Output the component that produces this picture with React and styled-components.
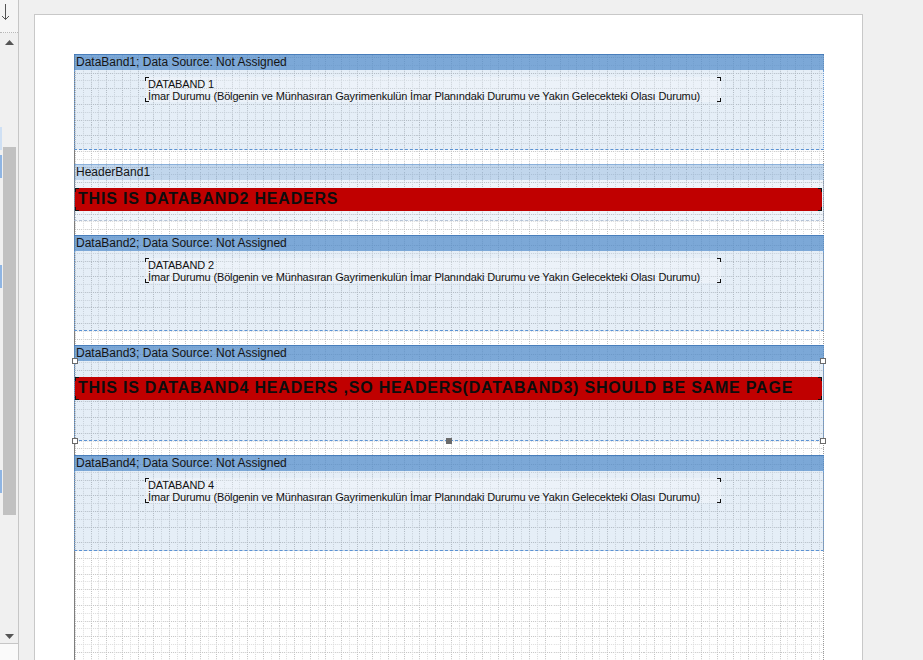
import React from "react";
import styled, { createGlobalStyle } from "styled-components";

const GlobalStyle = createGlobalStyle`
  html, body { margin: 0; padding: 0; }
  body {
    background: #f0f0f0;
    overflow: hidden;
    font-family: "Liberation Sans", Arial, sans-serif;
  }
  * { box-sizing: border-box; }
`;

const gridSvg = encodeURIComponent(
  "<svg xmlns='http://www.w3.org/2000/svg' width='15.66' height='15.66'>" +
    "<path d='M0.5 0V15.66M0 0.5H15.66' stroke='#c4c4c4' stroke-width='1' stroke-dasharray='1 1'/>" +
    "<path d='M8.33 0V15.66M0 8.33H15.66' stroke='#dcdcdc' stroke-width='1' stroke-dasharray='1 1'/>" +
    "</svg>"
);

const Screen = styled.div`
  display: flex;
  width: 923px;
  height: 660px;
  overflow: hidden;
`;

const LeftPanel = styled.div`
  width: 19px;
  flex: none;
  display: flex;
  flex-direction: column;
  border-right: 1px solid #c6c6c6;
  background: #f0f0f0;
`;

const TopTool = styled.div`
  height: 33px;
  flex: none;
  display: flex;
  justify-content: flex-start;
  padding-top: 3px;
  padding-left: 1px;
  border-bottom: 1px dotted #b8b8b8;
  background: #f5f5f5;
`;

const ScrollRow = styled.div`
  height: 610px;
  flex: none;
  display: flex;
`;

const Edge = styled.div`
  width: 2px;
  flex: none;
  display: flex;
  flex-direction: column;
`;

const Marker = styled.div`
  height: 23px;
  margin-top: ${(p) => p.$gap}px;
  background: ${(p) => (p.$light ? "#cfe0f4" : "#8fb5e3")};
`;

const ScrollTrack = styled.div`
  flex: 1;
  display: flex;
  flex-direction: column;
  align-items: center;
  padding-right: 2px;
`;

const ArrowBtn = styled.div`
  height: ${(p) => p.$h}px;
  display: flex;
  align-items: center;
  justify-content: center;
  flex: none;
`;

const Thumb = styled.div`
  width: 13px;
  height: 368px;
  margin-top: ${(p) => p.$top}px;
  background: #c1c1c1;
  flex: none;
`;

const TrackFill = styled.div`
  flex: 1;
`;

const PanelFoot = styled.div`
  flex: 1;
  border-top: 1px solid #c6c6c6;
  background: #fafafa;
`;

const Workspace = styled.div`
  flex: 1;
  padding-top: 14px;
  padding-left: 15px;
  background: #f0f0f0;
`;

const Page = styled.div`
  width: 829px;
  height: 700px;
  background: #ffffff;
  border: 1px solid #c8c8c8;
  padding: 39px 0 0 39px;
`;

const ReportArea = styled.div`
  width: 750px;
  height: 620px;
  border-left: 1px solid #7e7e7e;
  border-right: 1px dotted #9a9a9a;
  background-image: url("data:image/svg+xml,${gridSvg}");
  background-position: 0px 3px;
  display: flex;
  flex-direction: column;
`;

const Band = styled.div`
  margin-left: -1px;
  margin-right: -1px;
  margin-bottom: ${(p) => p.$gap}px;
  display: flex;
  flex-direction: column;
`;

const Caption = styled.div`
  height: 16px;
  padding-left: 2px;
  font-size: 12px;
  line-height: 15px;
  color: #151515;
  white-space: nowrap;
  background: ${(p) =>
    p.$header ? "rgba(74,134,200,0.34)" : "rgba(74,134,200,0.72)"};
  border-top: 1px solid
    ${(p) => (p.$header ? "rgba(74,134,200,0.45)" : "rgba(60,115,180,0.8)")};
`;

const Body = styled.div`
  position: relative;
  height: ${(p) => p.$h}px;
  padding-top: ${(p) => p.$pt}px;
  padding-left: ${(p) => p.$pl || 0}px;
  background: ${(p) =>
    p.$header ? "rgba(74,134,200,0.09)" : "rgba(74,134,200,0.14)"};
  border-left: 1px dotted
    ${(p) => (p.$header ? "rgba(120,150,190,0.6)" : "#6f9fd6")};
  border-right: 1px dotted
    ${(p) => (p.$header ? "rgba(120,150,190,0.6)" : "#6f9fd6")};
  border-bottom: 1px dashed
    ${(p) => (p.$header ? "#b5c3d6" : "#5b92d3")};
`;

const TextBox = styled.div`
  position: relative;
  width: 576px;
  height: 25px;
  padding: 1px 0 0 3px;
  font-size: 11px;
  line-height: 12px;
  letter-spacing: -0.15px;
  color: #111;
  background: rgba(255, 255, 255, 0.28);
  white-space: nowrap;
`;

const Corner = styled.span`
  position: absolute;
  width: 4px;
  height: 4px;
  border-color: #111;
  border-style: solid;
  border-width: 0;
  ${(p) => (p.$v === "t" ? "top: 0; border-top-width: 1.5px;" : "bottom: 0; border-bottom-width: 1.5px;")}
  ${(p) => (p.$h === "l" ? "left: 0; border-left-width: 1.5px;" : "right: 0; border-right-width: 1.5px;")}
`;

const RedBar = styled.div`
  position: relative;
  height: 23px;
  padding-left: 3px;
  background: #c00000;
  color: #0d0d0d;
  font-weight: bold;
  font-size: 16px;
  line-height: 22px;
  letter-spacing: 0.8px;
  white-space: nowrap;
  margin-right: 1px;
`;

const Handle = styled.span`
  position: absolute;
  width: 6px;
  height: 6px;
  border: 1px solid #6a6a6a;
  background: ${(p) => (p.$filled ? "#6a6a6a" : "#fff")};
  ${(p) => (p.$v === "t" ? "top: -3px;" : "bottom: -4px;")}
  ${(p) =>
    p.$h === "l" ? "left: -3px;" : p.$h === "r" ? "right: -3px;" : "left: 371px;"}
`;

const Corners = () => (
  <>
    <Corner $v="t" $h="l" />
    <Corner $v="b" $h="l" />
    <Corner $v="t" $h="r" />
    <Corner $v="b" $h="r" />
  </>
);

const LONG =
  "İmar Durumu (Bölgenin ve Münhasıran Gayrimenkulün İmar Planındaki Durumu ve Yakın Gelecekteki Olası Durumu)";

const DataBand = ({ n, gap }) => (
  <Band $gap={gap}>
    <Caption>{`DataBand${n}; Data Source: Not Assigned`}</Caption>
    <Body $h={80} $pt={7} $pl={70}>
      <TextBox>
        <Corners />
        {`DATABAND ${n}`}
        <br />
        {LONG}
      </TextBox>
    </Body>
  </Band>
);

const DownArrowIcon = () => (
  <svg width="9" height="18" viewBox="0 0 9 18">
    <path d="M4.5 1V16.5" stroke="#555" strokeWidth="1" />
    <path d="M1 13L4.5 16.5L8 13" stroke="#555" strokeWidth="1" fill="none" />
  </svg>
);

const Tri = ({ up }) => (
  <svg width="9" height="5" viewBox="0 0 9 5">
    <path d={up ? "M0 5L4.5 0L9 5Z" : "M0 0L9 0L4.5 5Z"} fill="#555" />
  </svg>
);

export default function App() {
  return (
    <>
      <GlobalStyle />
      <Screen>
        <LeftPanel>
          <TopTool>
            <DownArrowIcon />
          </TopTool>
          <ScrollRow>
            <Edge>
              <Marker $light $gap={94} />
              <Marker $gap={5} />
              <Marker $gap={87} />
              <Marker $gap={182} />
            </Edge>
            <ScrollTrack>
              <ArrowBtn $h={18}>
                <Tri up />
              </ArrowBtn>
              <Thumb $top={96} />
              <TrackFill />
              <ArrowBtn $h={14}>
                <Tri />
              </ArrowBtn>
            </ScrollTrack>
          </ScrollRow>
          <PanelFoot />
        </LeftPanel>
        <Workspace>
          <Page>
            <ReportArea>
              <DataBand n={1} gap={14} />
              <Band $gap={14}>
                <Caption $header>HeaderBand1</Caption>
                <Body $header $h={41} $pt={8}>
                  <RedBar>
                    <Corners />
                    THIS IS DATABAND2 HEADERS
                  </RedBar>
                </Body>
              </Band>
              <DataBand n={2} gap={14} />
              <Band $gap={14}>
                <Caption>DataBand3; Data Source: Not Assigned</Caption>
                <Body $h={80} $pt={16}>
                  <Handle $v="t" $h="l" />
                  <Handle $v="t" $h="r" />
                  <Handle $v="b" $h="l" />
                  <Handle $v="b" $h="r" />
                  <Handle $v="b" $h="m" $filled />
                  <RedBar>
                    <Corners />
                    THIS IS DATABAND4 HEADERS ,SO HEADERS(DATABAND3) SHOULD BE SAME PAGE
                  </RedBar>
                </Body>
              </Band>
              <DataBand n={4} gap={0} />
            </ReportArea>
          </Page>
        </Workspace>
      </Screen>
    </>
  );
}
